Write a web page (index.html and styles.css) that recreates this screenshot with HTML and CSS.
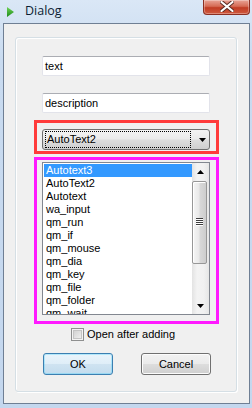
FILE: index.html
```html
<!DOCTYPE html>
<html>
<head>
<meta charset="utf-8">
<link rel="stylesheet" href="styles.css">
</head>
<body>
<div class="window">
  <div class="titlebar">
    <svg class="app-icon" width="7" height="10" viewBox="0 0 7 10"><defs><linearGradient id="g" x1="0" y1="0" x2="0" y2="1"><stop offset="0" stop-color="#6fd455"/><stop offset="1" stop-color="#1c8a1a"/></linearGradient></defs><polygon points="0,0 7,5 0,10" fill="url(#g)"/></svg>
    <span class="title">Dialog</span>
    <div class="close">
      <svg width="14" height="11" viewBox="0 0 14 11"><path d="M1.5 1 L12.5 10 M12.5 1 L1.5 10" stroke="#5a2b22" stroke-width="4" stroke-linecap="round"/><path d="M1.5 1 L12.5 10 M12.5 1 L1.5 10" stroke="#ffffff" stroke-width="2.2" stroke-linecap="round"/></svg>
    </div>
  </div>
  <div class="client">
    <div class="group">
      <div class="field first">text</div>
      <div class="field second">description</div>
      <div class="hl hl-red">
        <div class="combo">
          <span class="combo-focus">AutoText2</span>
          <svg class="combo-arrow" width="7" height="4" viewBox="0 0 7 4"><polygon points="0,0 7,0 3.5,4" fill="#000"/></svg>
        </div>
      </div>
      <div class="hl hl-magenta">
        <div class="listbox">
          <div class="items">
            <div class="item sel">Autotext3</div>
            <div class="item">AutoText2</div>
            <div class="item">Autotext</div>
            <div class="item">wa_input</div>
            <div class="item">qm_run</div>
            <div class="item">qm_if</div>
            <div class="item">qm_mouse</div>
            <div class="item">qm_dia</div>
            <div class="item">qm_key</div>
            <div class="item">qm_file</div>
            <div class="item">qm_folder</div>
            <div class="item">qm_wait</div>
          </div>
          <div class="scrollbar">
            <div class="sb-btn"><svg width="7" height="4" viewBox="0 0 7 4"><polygon points="3.5,0 7,4 0,4" fill="#000"/></svg></div>
            <div class="sb-track">
              <div class="thumb"><div class="grip"><i></i><i></i><i></i><i></i></div></div>
            </div>
            <div class="sb-btn"><svg width="7" height="4" viewBox="0 0 7 4"><polygon points="0,0 7,0 3.5,4" fill="#000"/></svg></div>
          </div>
        </div>
      </div>
      <div class="check"><span class="box"></span><span class="check-label">Open after adding</span></div>
      <div class="buttons">
        <div class="btn default">OK</div>
        <div class="btn">Cancel</div>
      </div>
    </div>
  </div>
</div>
</body>
</html>
```
FILE: styles.css
```css
* { box-sizing: border-box; margin: 0; padding: 0; }
html, body { width: 252px; height: 408px; overflow: hidden; }
body {
  font-family: "Liberation Sans", Arial, sans-serif;
  font-size: 11px;
  color: #000;
  background: #c6d9ef;
}
.window {
  width: 252px;
  height: 408px;
  display: flex;
  flex-direction: column;
  padding: 0 2px 4px 3px;
  background: linear-gradient(#dae7f6, #c9dbf0 60px, #c4d7ee);
}
.titlebar {
  height: 23px;
  display: flex;
  align-items: flex-start;
  flex: none;
}
.app-icon { margin: 7px 0 0 4px; flex: none; }
.title {
  font-family: "Open Sans", "Liberation Sans", sans-serif;
  font-size: 12.5px;
  line-height: 16px;
  margin: 3px 0 0 11px;
  color: #0b1d33;
}
.close {
  margin-left: auto;
  width: 47px;
  height: 15px;
  border: 1px solid #8b2f22;
  border-top: none;
  border-radius: 0 0 4px 4px;
  background: linear-gradient(#e9a496, #d56b55 45%, #c13c24 55%, #cf5a3f);
  box-shadow: inset 0 0 0 1px rgba(255,255,255,0.3);
  display: flex;
  align-items: center;
  justify-content: center;
}
.close svg { margin-top: -1px; }
.client {
  height: 381px;
  border: 1px solid #6f7f94;
  background: #f0f0f0;
  padding: 13px 12px 11px 11px;
}
.group {
  height: 355px;
  border: 1px solid #d5dfe5;
  border-radius: 3px;
  box-shadow: inset 1px 1px 0 #fff, 1px 1px 0 #fff;
  padding-left: 18px;
  display: flex;
  flex-direction: column;
  align-items: flex-start;
}
.field {
  width: 168px;
  height: 20px;
  margin-left: 8px;
  background: #fff;
  border: 1px solid #e2e3ea;
  border-top-color: #abadb3;
  border-radius: 2px;
  padding: 0 0 0 2px;
  line-height: 18px;
}
.field.first { margin-top: 18px; }
.field.second { margin-top: 17px; }
.hl { border: 3px solid; }
.hl-red {
  margin-top: 7px;
  width: 185px;
  height: 34px;
  border-color: #ff3b3b;
  padding: 6px 0 0 5px;
}
.combo {
  width: 168px;
  height: 21px;
  border: 1px solid #707070;
  border-radius: 3px;
  background: linear-gradient(#f3f3f3, #ebebeb 48%, #dddddd 52%, #cfcfcf);
  display: flex;
  align-items: center;
  padding-left: 1px;
}
.combo-focus {
  width: 146px;
  height: 17px;
  outline: 1px dotted #000;
  outline-offset: -1px;
  line-height: 17px;
  padding-left: 2px;
  margin-left: 1px;
}
.combo-arrow { margin-left: 8px; }
.hl-magenta {
  margin-top: 3px;
  width: 185px;
  height: 167px;
  border-color: #ff1aff;
  padding: 2px 0 0 5px;
}
.listbox {
  width: 168px;
  height: 153px;
  border: 1px solid #828790;
  background: #fff;
  display: flex;
  overflow: hidden;
}
.items {
  flex: 1;
  padding: 1px 0 0 1px;
  overflow: hidden;
}
.item {
  height: 13px;
  line-height: 13px;
  padding-left: 2px;
  white-space: nowrap;
}
.item.sel { background: #3399ff; color: #fff; }
.scrollbar {
  width: 17px;
  flex: none;
  display: flex;
  flex-direction: column;
  background: linear-gradient(90deg, #e3e3e3, #f3f3f3 30%, #f1f1f1 70%, #e6e6e6);
}
.sb-btn {
  height: 17px;
  flex: none;
  display: flex;
  align-items: center;
  justify-content: center;
}
.sb-track { flex: 1; padding-top: 1px; }
.thumb {
  width: 15px;
  height: 83px;
  border: 1px solid #979797;
  border-radius: 2px;
  background: linear-gradient(90deg, #f5f5f5, #e9e9e9 45%, #d8d8d8 55%, #cdcdcd);
  box-shadow: inset 1px 1px 0 #fff;
  display: flex;
  align-items: center;
  justify-content: center;
}
.grip { display: flex; flex-direction: column; margin-top: -2px; }
.grip i { display: block; width: 7px; height: 1px; background: #3d3d3d; box-shadow: 0 1px 0 #fff; }
.grip i + i { margin-top: 1px; }
.check {
  margin: 4px 0 0 37px;
  display: flex;
  align-items: center;
  height: 13px;
}
.box {
  width: 13px;
  height: 13px;
  border: 1px solid #8e8f8f;
  background: linear-gradient(135deg, #cbcbcb, #f6f6f6);
  box-shadow: inset 0 0 0 1px #f4f4f4, inset 0 0 0 2px #c4c4c4;
}
.check-label { margin-left: 3px; line-height: 13px; }
.buttons {
  margin: 12px 0 0 9px;
  display: flex;
  gap: 28px;
}
.btn {
  width: 70px;
  height: 22px;
  border: 1px solid #707070;
  border-radius: 3px;
  background: linear-gradient(#f2f2f2, #ebebeb 48%, #dddddd 52%, #cfcfcf);
  box-shadow: inset 0 0 0 1px #fcfcfc;
  text-align: center;
  line-height: 20px;
}
.btn.default {
  border-color: #3c7fb1;
  background: linear-gradient(#eaf4fb, #dfeef8 48%, #cfe3f1 52%, #c3dcee);
  box-shadow: inset 0 0 0 1px #48d3fb55;
}
```
